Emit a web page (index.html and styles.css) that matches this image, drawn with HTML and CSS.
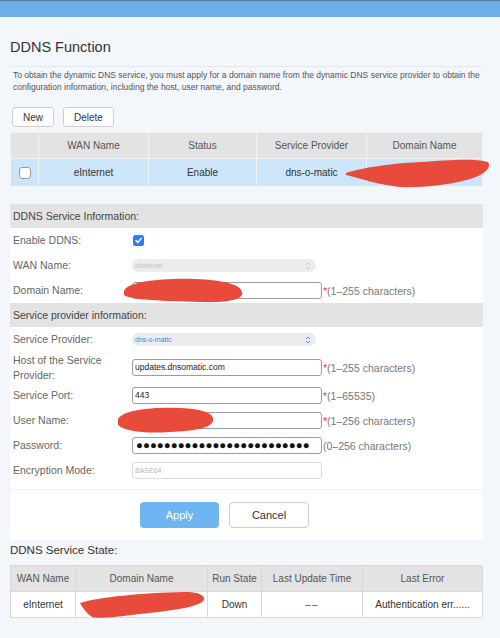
FILE: index.html
```html
<!DOCTYPE html>
<html lang="en">
<head>
    <meta charset="UTF-8">
    <meta name="viewport" content="width=device-width, initial-scale=1.0">
    <title>DDNS Function</title>
    <link rel="stylesheet" href="styles.css">
</head>
<body>
    <div class="topbar"></div>

    <div class="page">
        <h2 class="title">DDNS Function</h2>
        <p class="desc">To obtain the dynamic DNS service, you must apply for a domain name from the dynamic DNS service provider to obtain the configuration information, including the host, user name, and password.</p>

        <div class="toolbar">
            <button class="btn">New</button>
            <button class="btn">Delete</button>
        </div>

        <table class="grid ddns-list">
            <thead>
                <tr>
                    <th class="col-check"></th>
                    <th>WAN Name</th>
                    <th>Status</th>
                    <th>Service Provider</th>
                    <th>Domain Name</th>
                </tr>
            </thead>
            <tbody>
                <tr class="selected">
                    <td><span class="row-box"></span></td>
                    <td>eInternet</td>
                    <td>Enable</td>
                    <td>dns-o-matic</td>
                    <td></td>
                </tr>
            </tbody>
        </table>

        <div class="panel">
            <div class="section-head">DDNS Service Information:</div>
            <div class="fields">
                <div class="field">
                    <label>Enable DDNS:</label>
                    <span class="check">
                        <svg width="11" height="11" viewBox="0 0 11 11"><rect width="11" height="11" rx="2.5" fill="#2f7bf5"/><path d="M3 5.6 L4.8 7.6 L8.2 3.4" fill="none" stroke="#fff" stroke-width="1.5" stroke-linecap="round" stroke-linejoin="round"/></svg>
                    </span>
                </div>
                <div class="field">
                    <label>WAN Name:</label>
                    <div class="select disabled">eInternet
                        <svg class="arrows" width="6" height="8" viewBox="0 0 6 8"><path d="M1 3 L3 1 L5 3 M1 5 L3 7 L5 5" fill="none" stroke="#c4c4c4" stroke-width="0.9"/></svg>
                    </div>
                </div>
                <div class="field">
                    <label>Domain Name:</label>
                    <div class="input"></div>
                    <span class="hint"><span class="req">*</span>(1–255 characters)</span>
                </div>
            </div>

            <div class="section-head">Service provider information:</div>
            <div class="fields last">
                <div class="field">
                    <label>Service Provider:</label>
                    <div class="select active">dns-o-matic
                        <svg class="arrows" width="6" height="8" viewBox="0 0 6 8"><path d="M1 3 L3 1 L5 3 M1 5 L3 7 L5 5" fill="none" stroke="#3a86f0" stroke-width="0.9"/></svg>
                    </div>
                </div>
                <div class="field tall">
                    <label>Host of the Service Provider:</label>
                    <div class="input">updates.dnsomatic.com</div>
                    <span class="hint"><span class="req">*</span>(1–255 characters)</span>
                </div>
                <div class="field">
                    <label>Service Port:</label>
                    <div class="input">443</div>
                    <span class="hint"><span class="req">*</span>(1–65535)</span>
                </div>
                <div class="field">
                    <label>User Name:</label>
                    <div class="input"></div>
                    <span class="hint"><span class="req">*</span>(1–256 characters)</span>
                </div>
                <div class="field">
                    <label>Password:</label>
                    <div class="input password">●●●●●●●●●●●●●●●●●●●●●●●●●</div>
                    <span class="hint">(0–256 characters)</span>
                </div>
                <div class="field">
                    <label>Encryption Mode:</label>
                    <div class="input readonly">BASE64</div>
                </div>
            </div>

            <div class="actions">
                <button class="apply-button">Apply</button>
                <button class="cancel-button">Cancel</button>
            </div>
        </div>

        <h3 class="state-title">DDNS Service State:</h3>
        <table class="grid state-list">
            <thead>
                <tr>
                    <th class="c-wan">WAN Name</th>
                    <th class="c-domain">Domain Name</th>
                    <th class="c-run">Run State</th>
                    <th class="c-time">Last Update Time</th>
                    <th>Last Error</th>
                </tr>
            </thead>
            <tbody>
                <tr>
                    <td>eInternet</td>
                    <td></td>
                    <td>Down</td>
                    <td><span class="empty">––</span></td>
                    <td>Authentication err......</td>
                </tr>
            </tbody>
        </table>
    </div>

    <!-- hand-drawn marker strokes over the private fields -->
    <svg class="marks" width="500" height="638" viewBox="0 0 500 638">
        <path d="M346,173 C362,168 385,164 420,162 C450,160 474,158 488,162 C492,168 484,175 470,179 C450,185 420,188 400,187 C380,185 362,179 346,175 Z"/>
        <path d="M124,291 C127,282 160,278 195,279 C225,280 241,285 242,292 C244,299 230,303 200,302 C165,301 130,300 124,295 Z"/>
        <path d="M118,419 C124,410 150,407 180,408 C205,409 215,414 213,421 C211,428 195,431 170,432 C145,434 124,431 118,425 Z"/>
        <path d="M80,603 C100,597 140,593 185,592 C198,592 205,595 204,600 C200,607 170,611 140,614 C115,617 98,619 92,617 C86,613 82,607 80,603 Z"/>
    </svg>
</body>
</html>
```

FILE: styles.css
```css
body {
    margin: 0;
    position: relative;
    background-color: #f3f6fb;
    font-family: "Liberation Sans", Arial, sans-serif;
    color: #333;
}
.topbar {
    height: 16px;
    background-color: #6aafea;
    border-top: 1px solid #56799a;
}
.page {
    padding: 0 17px 0 10px;
}
.title {
    margin: 0;
    padding: 21px 0 10px;
    font-size: 14.5px;
    line-height: 18px;
    font-weight: normal;
    color: #333;
    border-bottom: 1px solid #e4e8ee;
}
.desc {
    margin: 0 -8px 0 0;
    padding: 2px 3px 0;
    font-size: 8.5px;
    line-height: 12px;
    color: #555;
}
.toolbar {
    display: flex;
    gap: 9px;
    margin: 14px 0 5px 2px;
}
.btn {
    height: 20px;
    padding: 0 10px;
    font-family: inherit;
    font-size: 10px;
    color: #333;
    background-color: #fff;
    border: 1px solid #cfcfcf;
    border-radius: 3px;
}

/* tables */
.grid {
    width: 100%;
    border-collapse: collapse;
    font-size: 10px;
    text-align: center;
}
.grid th {
    height: 25px;
    padding: 0;
    font-weight: normal;
    color: #555;
    background-color: #e3e3e3;
}
.grid td {
    height: 25px;
    padding: 0;
    color: #333;
}
.ddns-list th, .ddns-list td {
    border: 1px solid #f1f3f5;
}
.ddns-list td {
    height: 26px;
    border-bottom-color: #dde3ea;
}
.ddns-list .selected td {
    background-color: #cde5f9;
}
.col-check {
    width: 27px;
}
.ddns-list th:nth-child(2), .ddns-list th:nth-child(4) {
    width: 109px;
}
.ddns-list th:nth-child(3) {
    width: 107px;
}
.row-box {
    display: inline-block;
    width: 10px;
    height: 10px;
    margin-top: 3px;
    background-color: #fff;
    border: 1px solid #9a9a9a;
    border-radius: 3px;
}

/* settings panel */
.panel {
    margin-top: 18px;
    background-color: #fff;
}
.section-head {
    height: 24px;
    line-height: 24px;
    padding-left: 3px;
    font-size: 10.5px;
    color: #444;
    background-color: #e3e3e3;
}
.fields.last {
    padding-bottom: 6px;
    border-bottom: 1px solid #eef0f3;
}
.field {
    display: flex;
    align-items: center;
    height: 25px;
    font-size: 10.5px;
}
.field.tall {
    height: 31px;
}
.field label {
    width: 119px;
    flex-shrink: 0;
    padding-left: 3px;
    line-height: 15px;
    color: #666;
}
.check {
    display: flex;
    margin-left: 1px;
}
.select {
    position: relative;
    width: 181px;
    height: 13px;
    padding-left: 3px;
    line-height: 13px;
    font-size: 7px;
    border-radius: 7px;
    background-color: #ececec;
}
.select.disabled {
    color: #c2c2c2;
}
.select.active {
    color: #3a86f0;
}
.select .arrows {
    position: absolute;
    right: 5px;
    top: 2.5px;
}
.input {
    box-sizing: border-box;
    width: 190px;
    height: 17px;
    padding: 0 2px;
    line-height: 15px;
    font-size: 8.5px;
    color: #222;
    border: 1px solid #9d9d9d;
    border-radius: 3px;
    background-color: #fff;
}
.input.password {
    padding-left: 3px;
    font-size: 11.5px;
    letter-spacing: 0;
    color: #111;
    overflow: hidden;
    white-space: nowrap;
}
.input.readonly {
    font-size: 7px;
    color: #b8b8b8;
    border-color: #dcdcdc;
}
.hint {
    margin-left: 1px;
    color: #777;
}
.req {
    color: #f33;
}
.actions {
    display: flex;
    gap: 10px;
    padding: 12px 0 12px 130px;
}
.apply-button {
    width: 79px;
    height: 26px;
    font-family: inherit;
    font-size: 11px;
    color: #fff;
    background-color: #6fb4f3;
    border: none;
    border-radius: 4px;
}
.cancel-button {
    width: 80px;
    height: 26px;
    font-family: inherit;
    font-size: 11px;
    color: #333;
    background-color: #fff;
    border: 1px solid #cccccc;
    border-radius: 4px;
}

/* state table */
.state-title {
    margin: 3px 0 8px;
    font-size: 11.5px;
    line-height: 14px;
    font-weight: normal;
    color: #333;
}
.state-list th, .state-list td {
    border: 1px solid #d8d8d8;
}
.state-list td {
    background-color: #fff;
}
.state-list .empty {
    letter-spacing: 1.5px;
    color: #555;
}
.c-wan {
    width: 64px;
}
.c-domain {
    width: 131px;
}
.c-run {
    width: 53px;
}
.c-time {
    width: 100px;
}

.marks {
    position: absolute;
    top: 0;
    left: 0;
    pointer-events: none;
}
.marks path {
    fill: #e84b3c;
}
```
